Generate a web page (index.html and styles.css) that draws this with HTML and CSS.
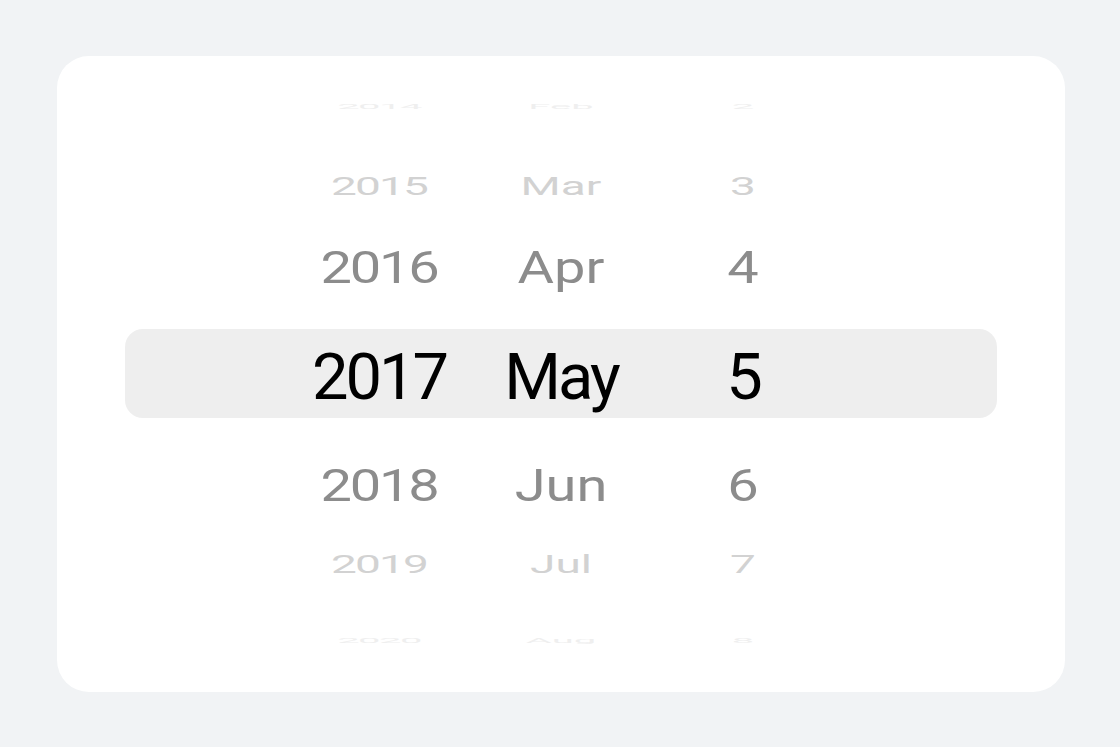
FILE: index.html
```html
<!DOCTYPE html>
<html lang="en">
<head>
<meta charset="utf-8">
<title>Date picker</title>
<link rel="stylesheet" href="styles.css">
</head>
<body>
<div class="card">
  <div class="wheel">
    <div class="row lv3 top3">
      <div class="cell yr"><span>2014</span></div>
      <div class="cell"><span>Feb</span></div>
      <div class="cell"><span>2</span></div>
    </div>
    <div class="row lv2 top2">
      <div class="cell yr"><span>2015</span></div>
      <div class="cell"><span>Mar</span></div>
      <div class="cell"><span>3</span></div>
    </div>
    <div class="row lv1 top1">
      <div class="cell yr"><span>2016</span></div>
      <div class="cell"><span>Apr</span></div>
      <div class="cell"><span>4</span></div>
    </div>
    <div class="row band">
      <div class="cell"><span>2017</span></div>
      <div class="cell"><span>May</span></div>
      <div class="cell"><span>5</span></div>
    </div>
    <div class="row lv1 bot1">
      <div class="cell yr"><span>2018</span></div>
      <div class="cell"><span>Jun</span></div>
      <div class="cell"><span>6</span></div>
    </div>
    <div class="row lv2 bot2">
      <div class="cell yr"><span>2019</span></div>
      <div class="cell"><span>Jul</span></div>
      <div class="cell"><span>7</span></div>
    </div>
    <div class="row lv3 bot3">
      <div class="cell yr"><span>2020</span></div>
      <div class="cell"><span>Aug</span></div>
      <div class="cell"><span>8</span></div>
    </div>
  </div>
</div>
</body>
</html>
```

FILE: styles.css
```css
html, body {
  margin: 0;
}
body {
  background: #f1f3f5;
  padding: 56px 55px 55px 57px;
  font-family: Roboto, "Noto Sans", sans-serif;
}
.card {
  height: 636px;
  background: #ffffff;
  border-radius: 32px;
  overflow: hidden;
}
.wheel {
  display: flex;
  flex-direction: column;
  margin-top: -9px;
}
.row {
  display: flex;
  justify-content: center;
  align-items: center;
  flex-shrink: 0;
}
.cell {
  width: 182px;
  text-align: center;
  line-height: 1;
}
.cell span {
  display: inline-block;
  white-space: nowrap;
}

.top3 { height: 118px; }
.top2 { height: 41px; }
.top1 { height: 123px; }
.bot1 { height: 136px; }
.bot2 { height: 20px; }
.bot3 { height: 132px; }

.band {
  height: 89px;
  box-sizing: border-box;
  padding-top: 8px;
  margin: 0 68px;
  background: #eeeeee;
  border-radius: 18px;
  font-size: 65px;
  color: #000000;
  letter-spacing: -3px;
}

.lv1 {
  font-size: 56px;
  color: #8c8c8c;
}
.lv1 .cell span { transform: scaleY(0.8); }

.lv2 {
  font-size: 46px;
  color: #d2d2d2;
}
.lv2 .cell span { transform: scaleY(0.58); }

.lv3 {
  font-size: 40px;
  color: #efefef;
}
.lv3 .cell span { transform: scaleY(0.2); }

.yr { letter-spacing: -0.04em; }
```
